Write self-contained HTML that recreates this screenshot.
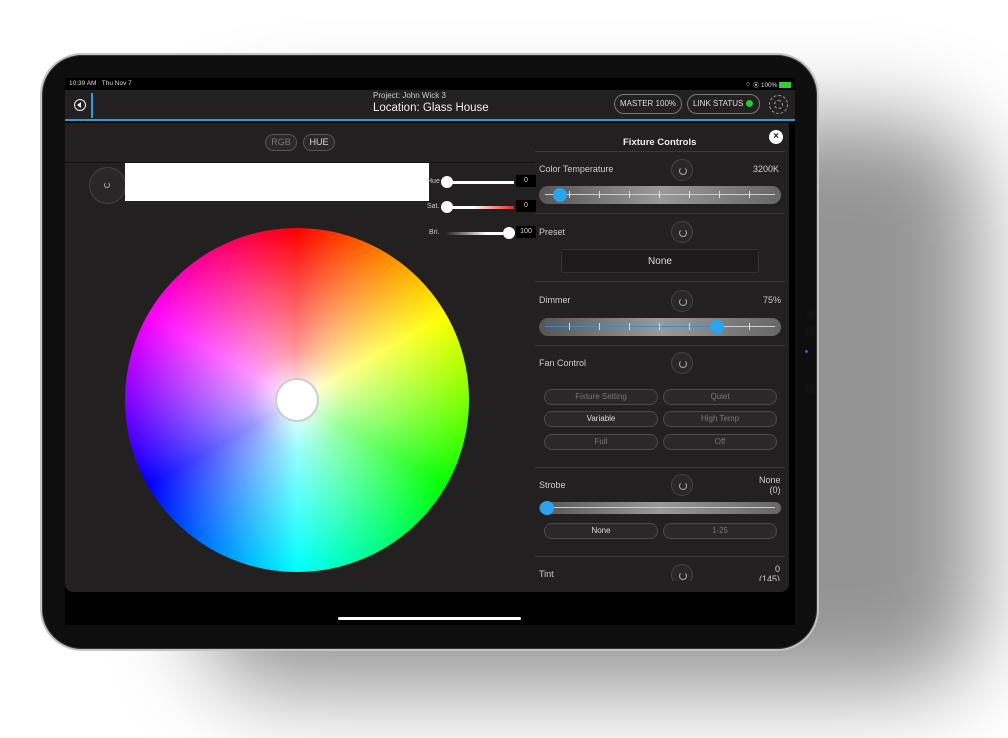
<!DOCTYPE html><html><head><style>
*{box-sizing:border-box;margin:0;padding:0}
body{width:1008px;height:738px;background:#fff;overflow:hidden;position:relative;font-family:"Liberation Sans",sans-serif;color:#ddd}
.abs{position:absolute}
.shadow{position:absolute;left:200px;top:120px;width:780px;height:570px;background:rgba(0,0,0,.42);filter:blur(45px);border-radius:80px}
.dev{position:absolute;left:40px;top:53px;width:779px;height:598px;border-radius:42px;background:#0e0e0e;border:2px solid #c4c4c4;box-shadow:inset 0 0 0 1px #333}
.screen{position:absolute;left:65px;top:78px;width:730px;height:547px;background:#000;overflow:hidden}
.hdr{position:absolute;left:0;top:12px;width:730px;height:31px;background:#232022;border-bottom:2px solid #2a9fd6}
.panel{position:absolute;left:0;top:45px;width:724px;height:469px;background:#232022;border-radius:0 0 8px 8px}
.pill{position:absolute;border:1px solid #555;border-radius:12px;font-size:9px;text-align:center;color:#888;background:#2b2829}
.rb{position:absolute;width:22px;height:22px;border-radius:50%;border:1px solid #444;background:#2a2728}
.rb:after{content:"";position:absolute;left:7px;top:7px;width:6px;height:6px;border:1px solid #aaa;border-radius:50%;border-top-color:transparent}
.bar{position:absolute;left:474px;width:242px;height:18px;border-radius:9px;background:linear-gradient(90deg,#555,#9a9a9a 50%,#666)}
.bar .ln{position:absolute;left:6px;right:6px;top:8px;height:1px;background:#ccc}
.bar .tk{position:absolute;top:5px;width:1px;height:7px;background:#ddd}
.knob{position:absolute;top:2px;width:14px;height:14px;border-radius:50%;background:#2aa4ee}
.lbl{position:absolute;font-size:9px;color:#ccc}
.sep{position:absolute;left:470px;width:250px;height:1px;background:#3a3a3a}
.ob{position:absolute;height:16px;width:114px;border:1px solid #4a4a4a;border-radius:8px;font-size:8px;text-align:center;line-height:14px;color:#777;background:#2b2829}
</style></head><body>
<div class="shadow"></div>
<div class="dev"></div>
<div class="abs" style="left:806px;top:310px;width:9px;height:9px;border-radius:50%;background:#111"></div>
<div class="abs" style="left:805px;top:326px;width:11px;height:11px;border-radius:50%;background:#111"></div>
<div class="abs" style="left:805px;top:350px;width:3px;height:3px;border-radius:50%;background:#1a6fb0"></div>
<div class="abs" style="left:805px;top:383px;width:11px;height:11px;border-radius:50%;background:#111"></div>
<div class="screen">
 <div class="abs" style="left:4px;top:2px;font-size:6.5px;color:#ddd">10:39 AM&nbsp;&nbsp; Thu Nov 7</div>
 <div class="abs" style="left:680px;top:2px;font-size:6.5px;color:#ddd">⌔ ◉ 100% <span style="display:inline-block;width:12px;height:6px;background:#3c3;vertical-align:middle"></span></div>
 <div class="hdr">
  <div class="abs" style="left:9px;top:9px;width:12px;height:12px;border:1.5px solid #eee;border-radius:50%"></div>
  <div class="abs" style="left:12px;top:12px;width:0;height:0;border-top:3px solid transparent;border-bottom:3px solid transparent;border-right:4px solid #eee"></div>
  <div class="abs" style="left:26px;top:3px;width:2px;height:25px;background:#2a9fd6"></div>
  <div class="abs" style="left:308px;top:1px;font-size:8px;color:#ccc">Project: John Wick 3</div>
  <div class="abs" style="left:308px;top:12px;font-size:11.5px;color:#eee">Location: Glass House</div>
  <div class="abs" style="left:549px;top:4px;width:68px;height:20px;border:1px solid #777;border-radius:10px;font-size:8px;line-height:18px;text-align:center;color:#ddd">MASTER 100%</div>
  <div class="abs" style="left:622px;top:4px;width:73px;height:20px;border:1px solid #777;border-radius:10px;font-size:8px;line-height:18px;padding-left:5px;color:#ddd">LINK STATUS <span style="display:inline-block;width:7px;height:7px;border-radius:50%;background:#2c3;vertical-align:-1px"></span></div>
  <div class="abs" style="left:704px;top:5px;width:19px;height:19px;border-radius:50%;border:1px dashed #999"><div class="abs" style="left:4px;top:4px;width:9px;height:9px;border-radius:50%;border:1px dashed #aaa"></div></div>
 </div>
 <div class="panel">
  <div class="abs" style="left:0;top:39px;width:470px;height:1px;background:#111"></div>
  <div class="pill" style="left:200px;top:11px;width:32px;height:17px;line-height:15px;color:#777">RGB</div>
  <div class="pill" style="left:238px;top:11px;width:32px;height:17px;line-height:15px;color:#ddd">HUE</div>
  <div class="abs" style="left:24px;top:44px;width:37px;height:37px;border-radius:50%;border:1px solid #444;background:#2a2728"></div>
  <div class="abs" style="left:39px;top:59px;width:6px;height:6px;border:1px solid #aaa;border-radius:50%;border-top-color:transparent"></div>
  <div class="abs" style="left:60px;top:40px;width:304px;height:38px;background:#fff"></div>
  <div class="lbl" style="left:362px;top:55px;font-size:7px">Hue</div>
  <div class="abs" style="left:381px;top:58px;width:68px;height:3px;background:#fff"></div>
  <div class="abs" style="left:376px;top:53px;width:12px;height:12px;border-radius:50%;background:#fff"></div>
  <div class="abs" style="left:451px;top:52px;width:20px;height:12px;background:#000;font-size:7px;text-align:center;line-height:12px">0</div>
  <div class="lbl" style="left:362px;top:80px;font-size:7px">Sat.</div>
  <div class="abs" style="left:381px;top:83px;width:68px;height:3px;background:linear-gradient(90deg,#fff 40%,#e22)"></div>
  <div class="abs" style="left:376px;top:78px;width:12px;height:12px;border-radius:50%;background:#fff"></div>
  <div class="abs" style="left:451px;top:77px;width:20px;height:12px;background:#000;font-size:7px;text-align:center;line-height:12px">0</div>
  <div class="lbl" style="left:364px;top:106px;font-size:7px">Bri.</div>
  <div class="abs" style="left:381px;top:109px;width:68px;height:3px;background:linear-gradient(90deg,#222,#fff 60%)"></div>
  <div class="abs" style="left:438px;top:104px;width:12px;height:12px;border-radius:50%;background:#fff"></div>
  <div class="abs" style="left:451px;top:103px;width:20px;height:12px;background:#000;font-size:7px;text-align:center;line-height:12px">100</div>
  <div class="abs" style="left:60px;top:105px;width:344px;height:344px;border-radius:50%;background:conic-gradient(#f00,#ff8000 30deg,#ff0 60deg,#80ff00 90deg,#0f0 120deg,#00ff80 150deg,#0ff 180deg,#0080ff 210deg,#00f 240deg,#8000ff 270deg,#f0f 300deg,#ff0080 330deg,#f00)"></div>
  <div class="abs" style="left:60px;top:105px;width:344px;height:344px;border-radius:50%;background:radial-gradient(circle,#fff 0,rgba(255,255,255,.6) 20%,rgba(255,255,255,0) 70%)"></div>
  <div class="abs" style="left:210px;top:255px;width:44px;height:44px;border-radius:50%;background:#fff;border:2px solid #ccc"></div>
  <!-- right -->
  <div class="abs" style="left:558px;top:14px;font-size:9.5px;font-weight:bold;color:#eee">Fixture Controls</div>
  <div class="abs" style="left:704px;top:7px;width:14px;height:14px;border-radius:50%;background:#fff;color:#222;font-size:10px;font-weight:bold;text-align:center;line-height:14px">×</div>
  <div class="sep" style="top:28px"></div>
  <div class="lbl" style="left:474px;top:41px">Color Temperature</div>
  <div class="rb" style="left:606px;top:36px"></div>
  <div class="lbl" style="left:688px;top:41px">3200K</div>
  <div class="bar" style="top:63px"><div class="ln"></div><div class="tk" style="left:30px"></div><div class="tk" style="left:60px"></div><div class="tk" style="left:90px"></div><div class="tk" style="left:120px"></div><div class="tk" style="left:150px"></div><div class="tk" style="left:180px"></div><div class="tk" style="left:210px"></div><div class="knob" style="left:14px"></div></div>
  <div class="sep" style="top:90px"></div>
  <div class="lbl" style="left:474px;top:104px">Preset</div>
  <div class="rb" style="left:606px;top:98px"></div>
  <div class="abs" style="left:496px;top:126px;width:198px;height:24px;background:#1c1a1b;border:1px solid #333;border-radius:3px;font-size:10px;text-align:center;line-height:24px;color:#ddd">None</div>
  <div class="sep" style="top:158px"></div>
  <div class="lbl" style="left:474px;top:172px">Dimmer</div>
  <div class="rb" style="left:606px;top:167px"></div>
  <div class="lbl" style="left:698px;top:172px">75%</div>
  <div class="bar" style="top:195px"><div class="ln" style="background:linear-gradient(90deg,#2a8fe0 72%,#ccc 72%)"></div><div class="tk" style="left:30px"></div><div class="tk" style="left:60px"></div><div class="tk" style="left:90px"></div><div class="tk" style="left:120px"></div><div class="tk" style="left:150px"></div><div class="tk" style="left:180px"></div><div class="tk" style="left:210px"></div><div class="knob" style="left:171px"></div></div>
  <div class="sep" style="top:222px"></div>
  <div class="lbl" style="left:474px;top:235px">Fan Control</div>
  <div class="rb" style="left:606px;top:229px"></div>
  <div class="ob" style="left:479px;top:266px">Fixture Setting</div>
  <div class="ob" style="left:598px;top:266px">Quiet</div>
  <div class="ob" style="left:479px;top:288px;color:#ddd">Variable</div>
  <div class="ob" style="left:598px;top:288px">High Temp</div>
  <div class="ob" style="left:479px;top:311px">Full</div>
  <div class="ob" style="left:598px;top:311px">Off</div>
  <div class="sep" style="top:344px"></div>
  <div class="lbl" style="left:474px;top:357px">Strobe</div>
  <div class="rb" style="left:606px;top:351px"></div>
  <div class="lbl" style="left:694px;top:352px;text-align:right;line-height:10px">None<br>&nbsp;&nbsp;&nbsp;(0)</div>
  <div class="bar" style="top:379px;height:12px"><div class="ln" style="top:5px"></div><div class="knob" style="left:1px;top:-1px"></div></div>
  <div class="ob" style="left:479px;top:400px;color:#ddd">None</div>
  <div class="ob" style="left:598px;top:400px">1-25</div>
  <div class="sep" style="top:433px"></div>
  <div class="lbl" style="left:474px;top:446px">Tint</div>
  <div class="rb" style="left:606px;top:441px"></div>
  <div class="lbl" style="left:694px;top:441px;text-align:right;line-height:10px">&nbsp;&nbsp;&nbsp;&nbsp;0<br>(145)</div>
  <div class="abs" style="left:470px;top:458px;width:254px;height:11px;background:#232022;border-radius:0 0 8px 0"></div>
 </div>
 <div class="abs" style="left:273px;top:539px;width:183px;height:3px;border-radius:2px;background:#fff"></div>
</div>
</body></html>
